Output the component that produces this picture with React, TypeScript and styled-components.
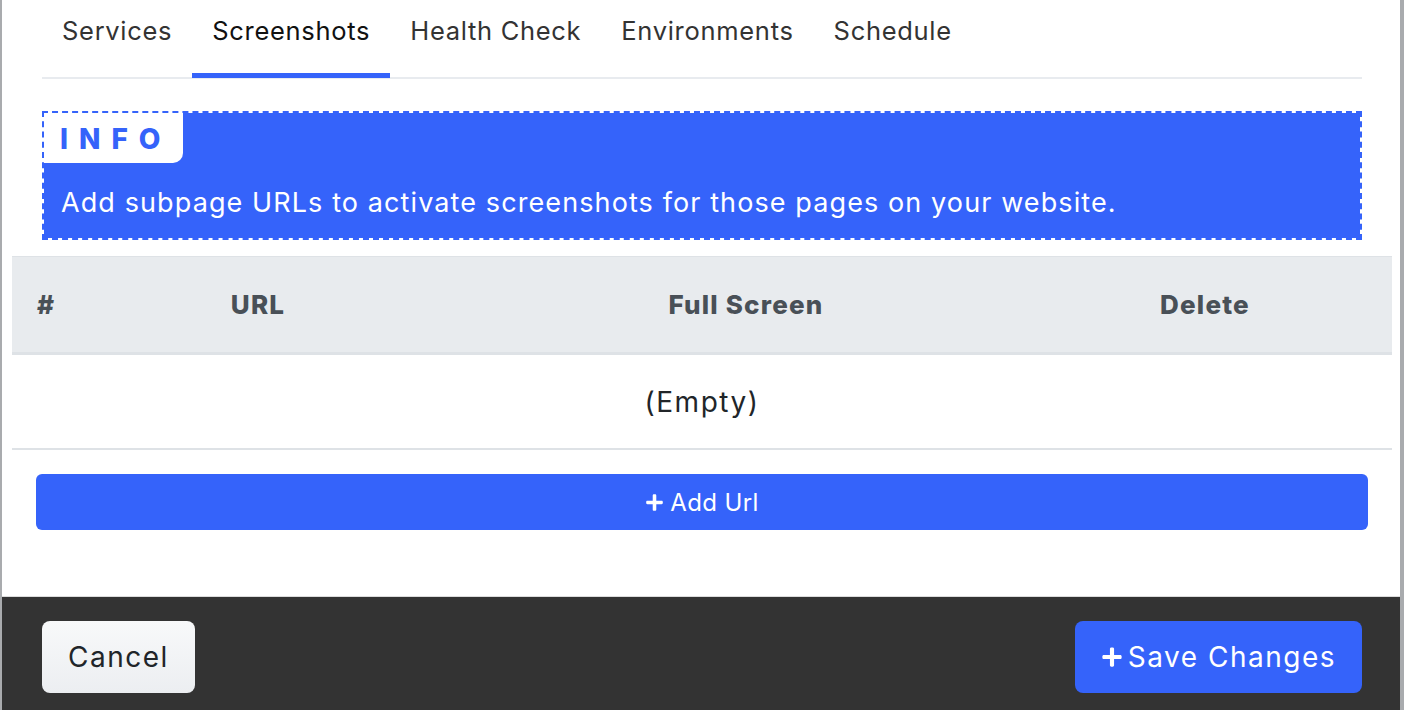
import React from "react";
import styled, { createGlobalStyle } from "styled-components";
import { FaPlus } from "react-icons/fa";

const GlobalStyle = createGlobalStyle`
	html, body {
		margin: 0;
		height: 100%;
		background-color: #a9abae;
		font-family: Inter, "Open Sans", sans-serif;
	}
	#root {
		height: 100%;
	}
`;

const Modal = styled.div`
	box-sizing: border-box;
	height: 710px;
	margin: 0 4px 0 2px;
	background-color: #fff;
	display: flex;
	flex-direction: column;
	overflow: hidden;
`;

const Body = styled.div`
	flex: 1;
	display: flex;
	flex-direction: column;
`;

const Tabs = styled.nav`
	display: flex;
	margin: 0 38px 0 40px;
	border-bottom: 2px solid #e8ebef;
`;

const Tab = styled.div<{ $active?: boolean }>`
	height: 78px;
	box-sizing: border-box;
	padding: 15px 20px 0;
	font-size: 25.5px;
	letter-spacing: 0.7px;
	color: ${(p) => (p.$active ? "#111" : "#333")};
	border-bottom: 5px solid ${(p) => (p.$active ? "#3563fa" : "transparent")};
	margin-bottom: -1px;
`;

const Info = styled.div`
	margin: 32px 38px 0 40px;
	height: 129px;
	box-sizing: border-box;
	border: 2px dashed #3563fa;
	background-color: #3563fa;
	background-clip: padding-box;
	display: flex;
	flex-direction: column;
	align-items: flex-start;
`;

const InfoLabel = styled.div`
	background-color: #fff;
	color: #3563fa;
	font-size: 28px;
	font-weight: 800;
	letter-spacing: 11px;
	height: 50px;
	line-height: 52px;
	padding: 0 12px 0 16px;
	border-bottom-right-radius: 10px;
`;

const InfoText = styled.p`
	margin: 23px 0 0 17px;
	color: #fff;
	font-size: 27px;
	letter-spacing: 1.1px;
`;

const Table = styled.div`
	margin: 16px 8px 0 10px;
`;

const HeadRow = styled.div`
	display: grid;
	grid-template-columns: 30px 432px 544px 1fr;
	align-items: center;
	height: 95px;
	background-color: #e8ebee;
	border-top: 1px solid #dee2e6;
	border-bottom: 3px solid #dee2e6;
`;

const Th = styled.div<{ $left?: boolean }>`
	font-size: 26px;
	font-weight: 800;
	letter-spacing: 1.2px;
	color: #495057;
	white-space: nowrap;
	text-align: ${(p) => (p.$left ? "left" : "center")};
	padding-left: ${(p) => (p.$left ? "25px" : "0")};
`;

const EmptyRow = styled.div`
	height: 93px;
	display: flex;
	align-items: center;
	justify-content: center;
	font-size: 28px;
	letter-spacing: 1.5px;
	color: #212529;
	border-bottom: 2px solid #dee2e6;
`;

const AddButton = styled.button`
	margin: 24px 32px 0 34px;
	height: 56px;
	border: none;
	border-radius: 6px;
	background-color: #3563fa;
	color: #fff;
	font-family: inherit;
	font-size: 24px;
	letter-spacing: 0.4px;
	display: flex;
	align-items: center;
	justify-content: center;
	gap: 6px;
	cursor: pointer;
`;

const Footer = styled.footer`
	height: 114px;
	box-sizing: border-box;
	background-color: #333;
	border-top: 1px solid #dcdcdc;
	padding: 24px 38px 0 40px;
	display: flex;
	justify-content: space-between;
	align-items: flex-start;
`;

const Button = styled.button<{ $primary?: boolean }>`
	height: 72px;
	padding: 0 26px;
	border: none;
	border-radius: 8px;
	font-family: inherit;
	font-size: 28px;
	letter-spacing: 1.5px;
	display: flex;
	align-items: center;
	gap: 5px;
	cursor: pointer;
	color: ${(p) => (p.$primary ? "#fff" : "#212529")};
	background: ${(p) =>
		p.$primary ? "#3563fa" : "linear-gradient(#f8f9fa, #eceef1)"};
`;

const tabs = ["Services", "Screenshots", "Health Check", "Environments", "Schedule"];

const App = () => {
	return (
		<>
			<GlobalStyle />
			<Modal>
				<Body>
					<Tabs>
						{tabs.map((t) => (
							<Tab key={t} $active={t === "Screenshots"}>
								{t}
							</Tab>
						))}
					</Tabs>
					<Info>
						<InfoLabel>INFO</InfoLabel>
						<InfoText>
							Add subpage URLs to activate screenshots for those pages on your website.
						</InfoText>
					</Info>
					<Table>
						<HeadRow>
							<Th $left>#</Th>
							<Th>URL</Th>
							<Th>Full Screen</Th>
							<Th>Delete</Th>
						</HeadRow>
						<EmptyRow>(Empty)</EmptyRow>
					</Table>
					<AddButton>
						<FaPlus size={19} />
						Add Url
					</AddButton>
				</Body>
				<Footer>
					<Button>Cancel</Button>
					<Button $primary>
						<FaPlus size={22} />
						Save Changes
					</Button>
				</Footer>
			</Modal>
		</>
	);
};

export default App;
